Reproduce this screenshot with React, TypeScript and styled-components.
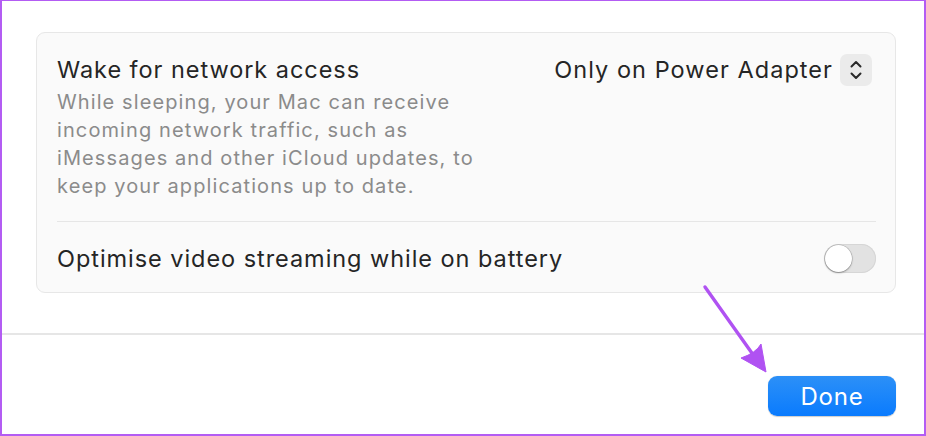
import styled, { createGlobalStyle } from "styled-components";

const GlobalStyle = createGlobalStyle`
  html, body {
    margin: 0;
    padding: 0;
    background: #ffffff;
  }
  * {
    box-sizing: border-box;
  }
`;

const App = () => {
  return (
    <>
      <GlobalStyle />
      <Frame>
        <Content>
          <Card>
            <SettingRow>
              <TextBlock>
                <Title>Wake for network access</Title>
                <Description>
                  While sleeping, your Mac can receive
                  <br />
                  incoming network traffic, such as
                  <br />
                  iMessages and other iCloud updates, to
                  <br />
                  keep your applications up to date.
                </Description>
              </TextBlock>
              <Select>
                <SelectValue>Only on Power Adapter</SelectValue>
                <Stepper>
                  <svg width="14" height="22" viewBox="0 0 14 22" fill="none">
                    <path
                      d="M2.5 7.5 L7 3 L11.5 7.5"
                      stroke="#2a2a2a"
                      strokeWidth="2"
                      strokeLinecap="round"
                      strokeLinejoin="round"
                    />
                    <path
                      d="M2.5 14.5 L7 19 L11.5 14.5"
                      stroke="#2a2a2a"
                      strokeWidth="2"
                      strokeLinecap="round"
                      strokeLinejoin="round"
                    />
                  </svg>
                </Stepper>
              </Select>
            </SettingRow>
            <Divider />
            <ToggleRow>
              <Title>Optimise video streaming while on battery</Title>
              <Toggle>
                <Knob />
              </Toggle>
            </ToggleRow>
          </Card>
        </Content>
        <Footer>
          <DoneButton>Done</DoneButton>
        </Footer>
        <Annotation width="926" height="436" viewBox="0 0 926 436">
          <path
            d="M705 287 L754 356"
            stroke="#b052f2"
            strokeWidth="3.4"
            strokeLinecap="round"
          />
          <path
            d="M741 358 L766 372 L761 344 Q756 353 741 358 Z"
            fill="#b052f2"
            stroke="#b052f2"
            strokeWidth="1"
            strokeLinejoin="round"
          />
        </Annotation>
      </Frame>
    </>
  );
};

const Frame = styled.div`
  position: relative;
  width: 926px;
  height: 436px;
  border: 2px solid #b35cf3;
  border-top-width: 1px;
  background: #ffffff;
  display: flex;
  flex-direction: column;
  font-family: Inter, "Noto Sans", "Liberation Sans", sans-serif;
  overflow: hidden;
`;

const Content = styled.div`
  padding: 31px 28px 40px 34px;
  border-bottom: 2px solid #e6e6e6;
`;

const Card = styled.div`
  background: #fafafa;
  border: 1px solid #e7e7e7;
  border-radius: 9px;
  padding: 0 19px 0 20px;
`;

const SettingRow = styled.div`
  display: flex;
  justify-content: space-between;
  align-items: flex-start;
  padding: 21px 0 21px;
`;

const TextBlock = styled.div`
  display: flex;
  flex-direction: column;
`;

const Title = styled.div`
  font-size: 23.5px;
  line-height: 32px;
  color: #252525;
  letter-spacing: 0.95px;
`;

const Description = styled.div`
  margin-top: 2px;
  font-size: 20px;
  line-height: 28px;
  color: #8b8b8b;
  letter-spacing: 1.1px;
`;

const Select = styled.div`
  display: flex;
  align-items: center;
  gap: 7px;
  padding-right: 4px;
`;

const SelectValue = styled.span`
  font-size: 23.5px;
  line-height: 32px;
  color: #252525;
  letter-spacing: 1.05px;
`;

const Stepper = styled.div`
  width: 32px;
  height: 32px;
  border-radius: 7px;
  background: #ebebeb;
  display: flex;
  align-items: center;
  justify-content: center;
`;

const Divider = styled.div`
  height: 1px;
  background: #e6e6e6;
`;

const ToggleRow = styled.div`
  height: 70px;
  padding-top: 3px;
  display: flex;
  align-items: center;
  justify-content: space-between;
`;

const Toggle = styled.div`
  width: 52px;
  height: 29px;
  border-radius: 15px;
  background: #e2e2e2;
  box-shadow: inset 0 0 0 1px #d6d6d6;
  padding: 1px;
  display: flex;
  align-items: center;
`;

const Knob = styled.div`
  width: 27px;
  height: 27px;
  border-radius: 50%;
  background: #ffffff;
  box-shadow: 0 0 0 0.5px rgba(0, 0, 0, 0.2), 0 1px 2px rgba(0, 0, 0, 0.3);
`;

const Footer = styled.div`
  flex: 1;
  display: flex;
  justify-content: flex-end;
  align-items: flex-start;
  padding: 41px 28px 0 0;
`;

const DoneButton = styled.button`
  width: 128px;
  height: 40px;
  border: none;
  border-radius: 9px;
  background: linear-gradient(180deg, #2c90f7 0%, #0a7bfe 100%);
  box-shadow: 0 0.5px 1px rgba(0, 0, 0, 0.2);
  color: #ffffff;
  font-family: inherit;
  font-size: 24px;
  letter-spacing: 0.8px;
  padding: 0;
`;

const Annotation = styled.svg`
  position: absolute;
  top: -1px;
  left: -2px;
  pointer-events: none;
`;

export default App;
